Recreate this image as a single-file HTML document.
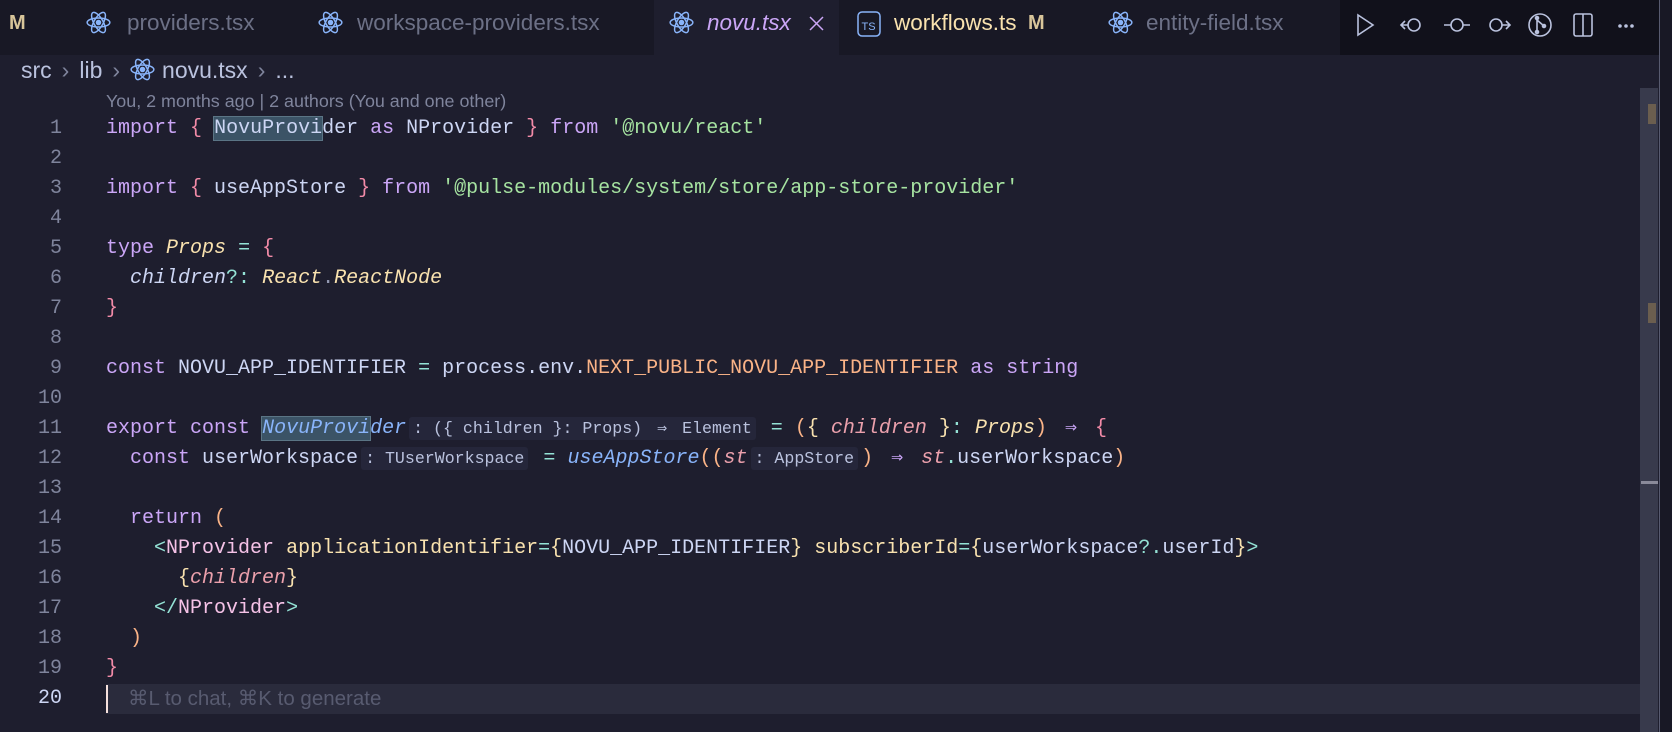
<!DOCTYPE html>
<html><head><meta charset="utf-8">
<style>
*{margin:0;padding:0;box-sizing:border-box}
body{width:1672px;height:732px;background:#1e1e2e;overflow:hidden;position:relative;font-family:"Liberation Sans",sans-serif}
.tabbar{position:absolute;left:0;top:0;width:1672px;height:55px;background:#181825}
.tab{position:absolute;top:0;height:55px;line-height:46px;font-size:22.5px;color:#6c7086;white-space:nowrap}
.ico{position:absolute;top:10px}
.actions{position:absolute;left:1340px;top:0;width:319px;height:55px;background:#11111b}
.crumb{position:absolute;left:21px;top:55px;font-size:23px;color:#bac2de;height:30px;line-height:30px;white-space:nowrap}
.crumb .sep{color:#7f849c;margin:0 10px}
.blame{position:absolute;left:106px;top:91px;font-size:17.9px;color:#7f849c}
.code{position:absolute;left:0;top:114px;font-family:"Liberation Mono",monospace;font-size:20px;color:#cdd6f4}
.ln{position:absolute;left:0;width:62px;text-align:right;height:30px;line-height:30px;color:#7f849c}
.l{position:absolute;left:106px;height:30px;line-height:30px;white-space:pre}
.k{color:#cba6f7}.s{color:#a6e3a1}.y{color:#f9e2af}.yi{color:#f9e2af;font-style:italic}.p{color:#fab387}.r{color:#f38ba8}.t{color:#94e2d5}.b{color:#89b4fa;font-style:italic}.m{color:#eba0ac;font-style:italic}.pk{color:#f5c2e7}.o{color:#9399b2}
.h{font-size:16.6px;color:#bac2de;background:#25263a;padding:2px 4px;margin:0 3px;border-radius:3px}
.ar{display:inline-block;width:24px;text-align:center}
.har{display:inline-block;width:20px;text-align:center}
.sel{background:#3b5366;outline:1px solid #5b7585}
</style></head><body>
<div class="tabbar">
 <div class="tab" style="left:9px;color:#d8c59a;font-weight:bold;font-size:20px">M</div>
 <svg class="ico" style="left:86px" width="25" height="25" viewBox="-11 -11 22 22" fill="none" stroke="#89b4fa" stroke-width="1.3"><ellipse rx="10" ry="4"/><ellipse rx="10" ry="4" transform="rotate(60)"/><ellipse rx="10" ry="4" transform="rotate(120)"/><circle r="1.8" fill="#89b4fa"/></svg>
 <div class="tab" style="left:127px">providers.tsx</div>
 <svg class="ico" style="left:318px" width="25" height="25" viewBox="-11 -11 22 22" fill="none" stroke="#89b4fa" stroke-width="1.3"><ellipse rx="10" ry="4"/><ellipse rx="10" ry="4" transform="rotate(60)"/><ellipse rx="10" ry="4" transform="rotate(120)"/><circle r="1.8" fill="#89b4fa"/></svg>
 <div class="tab" style="left:357px">workspace-providers.tsx</div>
 <div style="position:absolute;left:654px;top:0;width:185px;height:55px;background:#1e1e2e"></div>
 <svg class="ico" style="left:669px" width="25" height="25" viewBox="-11 -11 22 22" fill="none" stroke="#89b4fa" stroke-width="1.3"><ellipse rx="10" ry="4"/><ellipse rx="10" ry="4" transform="rotate(60)"/><ellipse rx="10" ry="4" transform="rotate(120)"/><circle r="1.8" fill="#89b4fa"/></svg>
 <div class="tab" style="left:707px;color:#cba6f7;font-style:italic">novu.tsx</div>
 <svg style="position:absolute;left:809px;top:16px" width="15" height="15" viewBox="0 0 15 15" stroke="#cba6f7" stroke-width="1.5"><path d="M1 1L14 14M14 1L1 14"/></svg>
 <svg class="ico" style="left:857px;top:11px" width="24" height="26" viewBox="0 0 24 26" fill="none" stroke="#89b4fa" stroke-width="1.5"><rect x="1" y="1" width="22" height="24" rx="4"/><text x="4.5" y="19" font-size="11" font-family="Liberation Sans" fill="#89b4fa" stroke="none">TS</text></svg>
 <div class="tab" style="left:894px;color:#f9e2af">workflows.ts</div>
 <div class="tab" style="left:1028px;color:#d8c59a;font-weight:bold;font-size:20px">M</div>
 <svg class="ico" style="left:1108px" width="25" height="25" viewBox="-11 -11 22 22" fill="none" stroke="#89b4fa" stroke-width="1.3"><ellipse rx="10" ry="4"/><ellipse rx="10" ry="4" transform="rotate(60)"/><ellipse rx="10" ry="4" transform="rotate(120)"/><circle r="1.8" fill="#89b4fa"/></svg>
 <div class="tab" style="left:1146px">entity-field.tsx</div>
 <div class="actions">
  <svg style="position:absolute;left:16px;top:11px" width="300" height="28" viewBox="0 0 300 26" fill="none" stroke="#bac2de" stroke-width="1.6">
   <path d="M2 3L17 13L2 23Z"/>
   <circle cx="58" cy="13" r="6"/><path d="M52 13H45M49 9L45 13L49 17"/>
   <circle cx="101" cy="13" r="6"/><path d="M88 13H95M107 13H114"/>
   <circle cx="140" cy="13" r="6"/><path d="M146 13H154M150 9L154 13L150 17"/>
   <circle cx="184" cy="13" r="11"/><circle cx="181" cy="6" r="1.5" fill="#bac2de"/><circle cx="181" cy="20" r="1.5" fill="#bac2de"/><circle cx="188" cy="14" r="1.5" fill="#bac2de"/><path d="M181 6V20M181 8L188 14"/>
   <rect x="218" y="2" width="18" height="22" rx="2"/><path d="M227 2V24"/>
   <circle cx="264" cy="14" r="1" fill="#bac2de"/><circle cx="270" cy="14" r="1" fill="#bac2de"/><circle cx="276" cy="14" r="1" fill="#bac2de"/>
  </svg>
 </div>
</div>
<div class="crumb">src<span class="sep">›</span>lib<span class="sep">›</span><svg style="vertical-align:-4px;margin-right:7px" width="25" height="25" viewBox="-11 -11 22 22" fill="none" stroke="#89b4fa" stroke-width="1.3"><ellipse rx="10" ry="4"/><ellipse rx="10" ry="4" transform="rotate(60)"/><ellipse rx="10" ry="4" transform="rotate(120)"/><circle r="1.8" fill="#89b4fa"/></svg>novu.tsx<span class="sep">›</span>...</div>
<div class="blame">You, 2 months ago | 2 authors (You and one other)</div>
<div style="position:absolute;left:106px;top:684px;width:1534px;height:30px;background:#2a2b3c"></div>
<div style="position:absolute;left:106px;top:685px;width:2px;height:28px;background:#f5e0dc"></div>
<div style="position:absolute;left:1640px;top:88px;width:18px;height:644px;background:#383a4c"></div>
<div style="position:absolute;left:1648px;top:104px;width:8px;height:20px;background:#6b5e4f"></div>
<div style="position:absolute;left:1648px;top:303px;width:8px;height:20px;background:#6b5e4f"></div>
<div style="position:absolute;left:1641px;top:481px;width:17px;height:3px;background:#8a8a9a"></div>
<div style="position:absolute;left:1659px;top:0;width:1px;height:732px;background:#585b70"></div>
<div style="position:absolute;left:1660px;top:0;width:12px;height:732px;background:#181825"></div>
<div class="code">
<div class="ln" style="top:0">1</div><div class="l" style="top:0"><span class="k">import</span> <span class="r">{</span> <span class="sel">NovuProvi</span>der <span class="k">as</span> NProvider <span class="r">}</span> <span class="k">from</span> <span class="s">'@novu/react'</span></div>
<div class="ln" style="top:30px">2</div>
<div class="ln" style="top:60px">3</div><div class="l" style="top:60px"><span class="k">import</span> <span class="r">{</span> useAppStore <span class="r">}</span> <span class="k">from</span> <span class="s">'@pulse-modules/system/store/app-store-provider'</span></div>
<div class="ln" style="top:90px">4</div>
<div class="ln" style="top:120px">5</div><div class="l" style="top:120px"><span class="k">type</span> <span class="yi">Props</span> <span class="t">=</span> <span class="r">{</span></div>
<div class="ln" style="top:150px">6</div><div class="l" style="top:150px">  <span class="m" style="color:#cdd6f4">children</span><span class="t">?:</span> <span class="yi">React</span><span class="o">.</span><span class="yi">ReactNode</span></div>
<div class="ln" style="top:180px">7</div><div class="l" style="top:180px"><span class="r">}</span></div>
<div class="ln" style="top:210px">8</div>
<div class="ln" style="top:240px">9</div><div class="l" style="top:240px"><span class="k">const</span> NOVU_APP_IDENTIFIER <span class="t">=</span> process.env.<span class="p">NEXT_PUBLIC_NOVU_APP_IDENTIFIER</span> <span class="k">as</span> <span class="k">string</span></div>
<div class="ln" style="top:270px">10</div>
<div class="ln" style="top:300px">11</div><div class="l" style="top:300px"><span class="k">export</span> <span class="k">const</span> <span class="b"><span class="sel">NovuProvi</span>der</span><span class="h">: ({ children }: Props) <span class="har">⇒</span> Element</span> <span class="t">=</span> <span class="p">(</span><span class="y">{</span> <span class="m">children</span> <span class="y">}</span><span class="t">:</span> <span class="yi">Props</span><span class="p">)</span> <span class="k ar">⇒</span> <span class="r">{</span></div>
<div class="ln" style="top:330px">12</div><div class="l" style="top:330px">  <span class="k">const</span> userWorkspace<span class="h">: TUserWorkspace</span> <span class="t">=</span> <span class="b">useAppStore</span><span class="p">((</span><span class="m">st</span><span class="h">: AppStore</span><span class="p">)</span> <span class="k ar">⇒</span> <span class="m">st</span><span class="t">.</span>userWorkspace<span class="p">)</span></div>
<div class="ln" style="top:360px">13</div>
<div class="ln" style="top:390px">14</div><div class="l" style="top:390px">  <span class="k">return</span> <span class="p">(</span></div>
<div class="ln" style="top:420px">15</div><div class="l" style="top:420px">    <span class="t">&lt;</span><span class="pk">NProvider</span> <span class="y">applicationIdentifier</span><span class="t">=</span><span class="y">{</span>NOVU_APP_IDENTIFIER<span class="y">}</span> <span class="y">subscriberId</span><span class="t">=</span><span class="y">{</span>userWorkspace<span class="t">?.</span>userId<span class="y">}</span><span class="t">&gt;</span></div>
<div class="ln" style="top:450px">16</div><div class="l" style="top:450px">      <span class="y">{</span><span class="m">children</span><span class="y">}</span></div>
<div class="ln" style="top:480px">17</div><div class="l" style="top:480px">    <span class="t">&lt;/</span><span class="pk">NProvider</span><span class="t">&gt;</span></div>
<div class="ln" style="top:510px">18</div><div class="l" style="top:510px">  <span class="p">)</span></div>
<div class="ln" style="top:540px">19</div><div class="l" style="top:540px"><span class="r">}</span></div>
<div class="ln" style="top:570px;color:#cdd6f4">20</div><div class="l" style="top:570px;left:128px;font-family:'Liberation Sans',sans-serif;font-size:20.5px;color:#585b70">⌘L to chat, ⌘K to generate</div>
</div>
</body></html>
